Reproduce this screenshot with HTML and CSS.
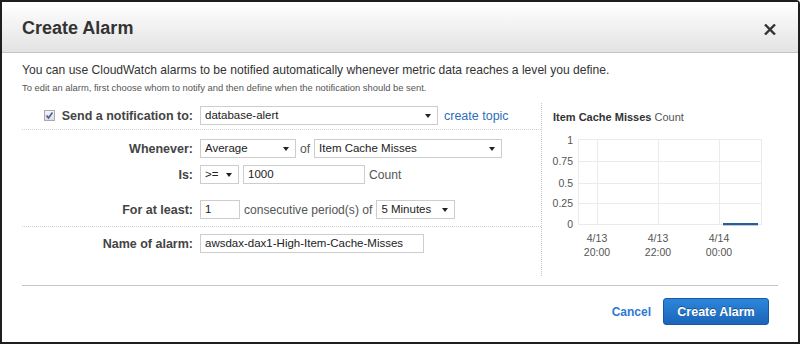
FILE: index.html
```html
<!DOCTYPE html>
<html lang="en">
<head>
    <meta charset="UTF-8">
    <title>Create Alarm</title>
    <link rel="stylesheet" href="styles.css">
</head>
<body>
    <div class="dialog">
        <div class="dialog-header">
            <h1>Create Alarm</h1>
            <button class="close" aria-label="Close">
                <svg width="12" height="11" viewBox="0 0 12 11">
                    <path d="M1 0.5 L11 10.5 M11 0.5 L1 10.5" stroke="#333" stroke-width="2.4" fill="none"/>
                </svg>
            </button>
        </div>
        <div class="dialog-body">
            <p class="intro">You can use CloudWatch alarms to be notified automatically whenever metric data reaches a level you define.</p>
            <p class="hint">To edit an alarm, first choose whom to notify and then define when the notification should be sent.</p>

            <div class="alarm">
                <div class="alarm-form">
                    <div class="section section-notify">
                        <div class="row">
                            <label class="row-label">
                                <span class="checkbox">
                                    <svg width="11" height="11" viewBox="0 0 11 11">
                                        <path d="M2.5 5.5 L4.5 8 L8.5 2.5" stroke="#3e5fa8" stroke-width="1.6" fill="none"/>
                                    </svg>
                                </span>
                                Send a notification to:
                            </label>
                            <div class="row-fields">
                                <div class="select select-topic">database-alert</div>
                                <a class="link" href="#">create topic</a>
                            </div>
                        </div>
                    </div>

                    <div class="section section-threshold">
                        <div class="row">
                            <label class="row-label">Whenever:</label>
                            <div class="row-fields">
                                <div class="select select-stat">Average</div>
                                <span class="text">of</span>
                                <div class="select select-metric">Item Cache Misses</div>
                            </div>
                        </div>
                        <div class="row row-is">
                            <label class="row-label">Is:</label>
                            <div class="row-fields">
                                <div class="select select-op">&gt;=</div>
                                <div class="input input-value">1000</div>
                                <span class="text">Count</span>
                            </div>
                        </div>
                        <div class="row row-period">
                            <label class="row-label">For at least:</label>
                            <div class="row-fields">
                                <div class="input input-periods">1</div>
                                <span class="text">consecutive period(s) of</span>
                                <div class="select select-period">5 Minutes</div>
                            </div>
                        </div>
                    </div>

                    <div class="section section-name">
                        <div class="row">
                            <label class="row-label">Name of alarm:</label>
                            <div class="row-fields">
                                <div class="input input-name">awsdax-dax1-High-Item-Cache-Misses</div>
                            </div>
                        </div>
                    </div>
                </div>

                <div class="alarm-chart">
                    <div class="chart-title"><b>Item Cache Misses</b> Count</div>
                    <svg class="chart" width="236" height="146" viewBox="0 0 236 146">
                        <g stroke="#ebebeb" stroke-width="1">
                            <line x1="36" y1="9.5" x2="220" y2="9.5"/>
                            <line x1="36" y1="31.5" x2="220" y2="31.5"/>
                            <line x1="36" y1="53.5" x2="220" y2="53.5"/>
                            <line x1="36" y1="73.5" x2="220" y2="73.5"/>
                            <line x1="36" y1="94.5" x2="220" y2="94.5"/>
                            <line x1="36.5" y1="9" x2="36.5" y2="95"/>
                            <line x1="55.5" y1="9" x2="55.5" y2="95"/>
                            <line x1="116.5" y1="9" x2="116.5" y2="95"/>
                            <line x1="177.5" y1="9" x2="177.5" y2="95"/>
                            <line x1="219.5" y1="9" x2="219.5" y2="95"/>
                        </g>
                        <g class="axis" text-anchor="end">
                            <text x="31" y="14">1</text>
                            <text x="31" y="35">0.75</text>
                            <text x="31" y="57">0.5</text>
                            <text x="31" y="77">0.25</text>
                            <text x="31" y="98">0</text>
                        </g>
                        <g class="axis" text-anchor="middle">
                            <text x="55" y="112">4/13</text>
                            <text x="116" y="112">4/13</text>
                            <text x="177" y="112">4/14</text>
                            <text x="55" y="126">20:00</text>
                            <text x="116" y="126">22:00</text>
                            <text x="177" y="126">00:00</text>
                        </g>
                        <line x1="181" y1="95.5" x2="216" y2="95.5" stroke="#c8c8c8" stroke-width="1"/>
                        <line x1="181" y1="94" x2="216" y2="94" stroke="#1f5fa6" stroke-width="2"/>
                    </svg>
                </div>
            </div>
        </div>
        <div class="dialog-footer">
            <a class="cancel" href="#">Cancel</a>
            <button class="primary">Create Alarm</button>
        </div>
    </div>
</body>
</html>
```

FILE: styles.css
```css
body {
    margin: 0;
    font-family: "Liberation Sans", Arial, sans-serif;
    background: #fff;
    color: #333;
}
.dialog {
    width: 800px;
    height: 344px;
    box-sizing: border-box;
    border: 2px solid #1e1e1e;
    border-top-right-radius: 4px;
    background: #fff;
}
.dialog-header {
    height: 50px;
    display: flex;
    align-items: center;
    justify-content: space-between;
    padding: 0 20px;
    background: linear-gradient(#ffffff, #e3e3e3);
    border-bottom: 1px solid #c4c4c4;
}
.dialog-header h1 {
    margin: 0;
    font-size: 18px;
    font-weight: bold;
    color: #333;
    padding-top: 2px;
}
.close {
    border: none;
    background: none;
    padding: 0;
    margin-right: 2px;
    margin-top: 4px;
    display: flex;
}
.dialog-body {
    padding: 0 20px;
}
.intro {
    margin: 9px 0 0 0;
    font-size: 12.1px;
    line-height: 16px;
    color: #333;
}
.hint {
    margin: 4px 0 0 0;
    font-size: 9.4px;
    line-height: 12px;
    color: #555;
}
.alarm {
    margin-top: 9px;
    display: flex;
    height: 173px;
}
.alarm-form {
    width: 519px;
    border-right: 1px dotted #c8c8c8;
}
.section {
    border-bottom: 1px dotted #cfcfcf;
}
.section-notify {
    height: 27px;
    padding-top: 3px;
    box-sizing: border-box;
}
.section-threshold {
    height: 97px;
    padding-top: 9px;
    box-sizing: border-box;
}
.section-name {
    border-bottom: none;
    padding-top: 7px;
}
.row {
    display: grid;
    grid-template-columns: 171px 1fr;
    column-gap: 7px;
    align-items: center;
}
.row-is {
    margin-top: 7px;
}
.row-period {
    margin-top: 16px;
}
.row-label {
    display: flex;
    justify-content: flex-end;
    align-items: center;
    font-size: 12.5px;
    font-weight: bold;
    color: #444;
}
.checkbox {
    width: 11px;
    height: 11px;
    box-sizing: border-box;
    border: 1px solid #a9a9a9;
    background: linear-gradient(#f4f4f4, #dedede);
    margin-right: 7px;
    display: flex;
}
.checkbox svg {
    margin: -1px;
}
.row-fields {
    display: flex;
    align-items: center;
    gap: 4px;
    font-size: 12.1px;
    color: #555;
}
.select,
.input {
    height: 19px;
    box-sizing: border-box;
    border: 1px solid #cdcdcd;
    background: #fff;
    font-size: 11.5px;
    color: #222;
    line-height: 17px;
    padding-left: 4px;
    white-space: nowrap;
}
.select {
    position: relative;
}
.select::after {
    content: "";
    position: absolute;
    right: 6px;
    top: 7px;
    border-left: 3px solid transparent;
    border-right: 3px solid transparent;
    border-top: 4px solid #222;
}
.select-topic { width: 238px; }
.select-stat { width: 96px; }
.select-metric { width: 188px; }
.select-op { width: 39px; }
.select-period { width: 79px; }
.input-value { width: 122px; }
.input-periods { width: 40px; }
.input-name { width: 224px; }
.link {
    color: #2c6fbd;
    text-decoration: none;
    margin-left: 2px;
    font-size: 12.5px;
}
.alarm-chart {
    flex: 1;
}
.chart-title {
    padding: 7px 0 0 11px;
    font-size: 11px;
    line-height: 14px;
    color: #555;
}
.chart-title b {
    color: #333;
}
.chart {
    display: block;
    margin-top: 6px;
}
.axis text {
    font-family: "Liberation Sans", Arial, sans-serif;
    font-size: 10.5px;
    fill: #555;
}
.dialog-footer {
    margin: 9px 20px 0 20px;
    border-top: 1px solid #c6c6c6;
    padding: 12px 9px 0 0;
    display: flex;
    justify-content: flex-end;
    align-items: center;
    gap: 12px;
}
.cancel {
    color: #2d7ad4;
    font-size: 12px;
    font-weight: bold;
    text-decoration: none;
}
.primary {
    width: 106px;
    height: 27px;
    border: 1px solid #1559a8;
    border-radius: 3px;
    background: linear-gradient(#2d86da, #1b65ba);
    color: #fff;
    font-family: "Liberation Sans", Arial, sans-serif;
    font-size: 12.5px;
    font-weight: bold;
    text-shadow: 0 -1px 0 rgba(0, 0, 0, 0.35);
    padding: 0;
}
```
